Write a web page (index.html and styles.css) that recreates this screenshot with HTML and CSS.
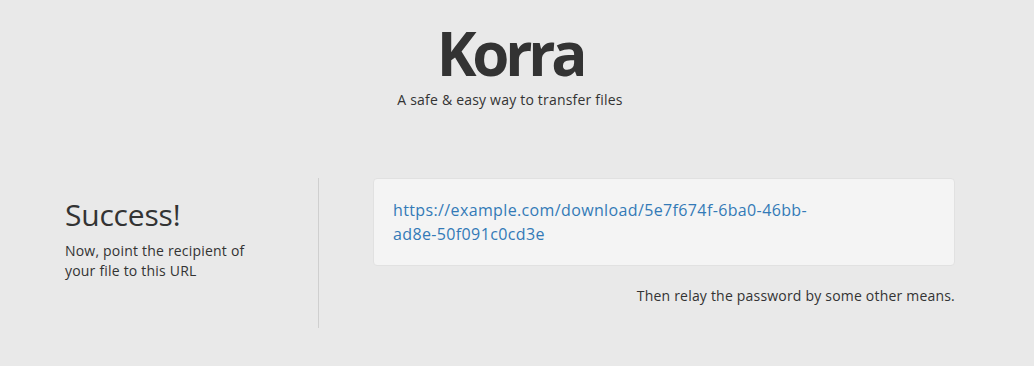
FILE: index.html
```html
<!DOCTYPE html>
<html>
<head>
<meta charset="utf-8">
<link rel="stylesheet" href="styles.css">
</head>
<body>
<div class="page">
  <header class="header">
    <h1 class="title">Korra</h1>
    <p class="tagline">A safe &amp; easy way to transfer files</p>
  </header>
  <main class="main">
    <section class="intro">
      <h2 class="intro-title">Success!</h2>
      <p class="intro-text">Now, point the recipient of your file to this URL</p>
    </section>
    <section class="result">
      <div class="well">
        <a class="link" href="#">https://example.com/download/5e7f674f-6ba0-46bb-<span class="nobreak">ad8e-50f091c0cd3e</span></a>
      </div>
      <p class="note">Then relay the password by some other means.</p>
    </section>
  </main>
</div>
</body>
</html>
```

FILE: styles.css
```css
* { box-sizing: border-box; }
html, body {
  margin: 0;
  padding: 0;
  background: #e9e9e9;
}
body {
  font-family: "Open Sans", "Liberation Sans", sans-serif;
  font-size: 14px;
  line-height: 20px;
  letter-spacing: 0.2px;
  color: #333;
}
.page {
  width: 1020px;
  height: 366px;
}
.header {
  text-align: center;
  padding-top: 23px;
}
.title {
  margin: 0;
  font-size: 60px;
  line-height: 60px;
  font-weight: 700;
  letter-spacing: -4.2px;
  color: #333;
}
.tagline {
  margin: 7px 0 0;
}
.main {
  display: flex;
  margin-top: 68px;
  padding: 0 65px;
  min-height: 150px;
}
.intro {
  width: 254px;
  border-right: 1px solid #cfcfcf;
  padding-top: 20px;
}
.intro-title {
  margin: 0 0 10px;
  font-size: 30px;
  line-height: 33px;
  font-weight: 400;
  letter-spacing: -0.2px;
}
.intro-text {
  margin: 0;
  width: 205px;
}
.result {
  flex: 1;
  padding-left: 54px;
}
.well {
  background: #f4f4f4;
  border: 1px solid #e1e1e1;
  border-radius: 4px;
  padding: 19px;
  font-size: 16px;
  line-height: 24px;
  letter-spacing: 0.37px;
  margin-bottom: 20px;
}
.link {
  color: #337ab7;
  text-decoration: none;
}
.nobreak {
  white-space: nowrap;
}
.note {
  margin: 0;
  text-align: right;
}
```
